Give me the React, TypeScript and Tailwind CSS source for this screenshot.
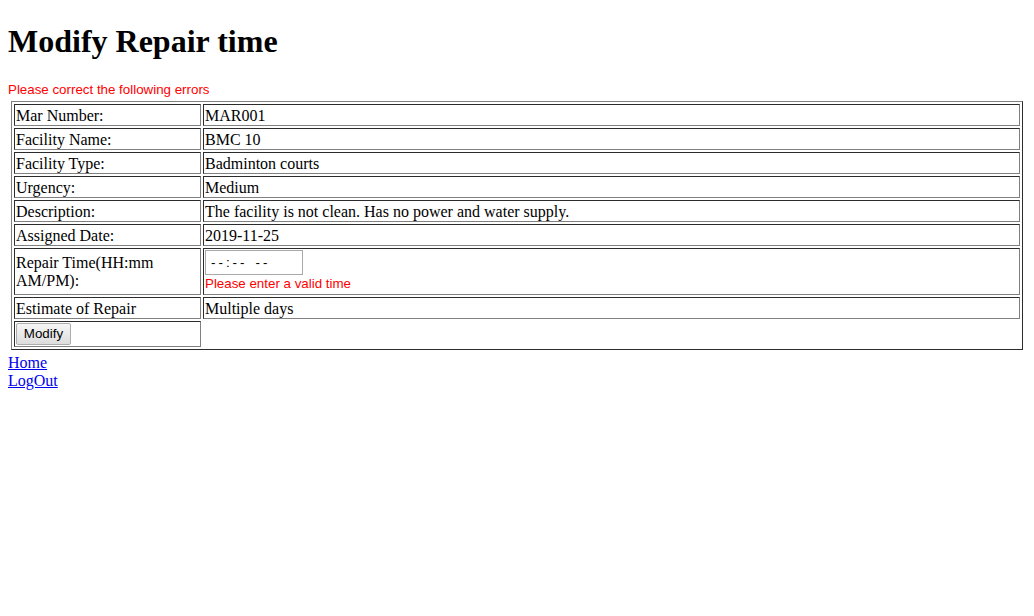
import React from 'react';

const rows: { label: string; value: string }[] = [
  { label: 'Mar Number:', value: 'MAR001' },
  { label: 'Facility Name:', value: 'BMC 10' },
  { label: 'Facility Type:', value: 'Badminton courts' },
  { label: 'Urgency:', value: 'Medium' },
  { label: 'Description:', value: 'The facility is not clean. Has no power and water supply.' },
  { label: 'Assigned Date:', value: '2019-11-25' },
];

const cell =
  'border border-t-[#2c2c2c] border-l-[#2c2c2c] border-r-[#808080] border-b-[#808080] p-[1px] text-left align-middle font-normal';

const App: React.FC = () => {
  return (
    <div className="m-2 font-['Liberation_Serif',serif] text-base leading-[18px] text-black">
      <h1 className="mt-[23px] mb-[21px] text-[32px] font-bold leading-[37px]">Modify Repair time</h1>

      <div className="h-[20px] font-['Liberation_Sans',Arial,sans-serif] text-[13.33px] leading-[18px] text-[#ff0000]">
        Please correct the following errors
      </div>

      <table className="ml-[3px] w-[1012px] border-separate border-spacing-[2px] border border-t-[#808080] border-l-[#808080] border-r-[#2c2c2c] border-b-[#2c2c2c]">
        <tbody>
          {rows.map((row) => (
            <tr key={row.label}>
              <td className={`${cell} w-[187px] h-[22px] pt-[2px] pb-0`}>{row.label}</td>
              <td className={`${cell} h-[22px] pt-[2px] pb-0`}>{row.value}</td>
            </tr>
          ))}
          <tr>
            <td className={`${cell} w-[187px]`}>
              Repair Time(HH:mm
              <br />
              AM/PM):
            </td>
            <td className={cell}>
              {/* time input placeholder, drawn like the browser's empty time field */}
              <div className="flex h-[25px] w-[98px] items-center border border-[#a9a9a9] bg-white pl-[5px] font-['Liberation_Sans',Arial,sans-serif] text-[13.33px] leading-none">
                <span className="tracking-[3px]">--</span>
                <span className="mr-[3px]">:</span>
                <span className="tracking-[3px]">--</span>
                <span className="ml-[8px] tracking-[3px]">--</span>
              </div>
              <div className="mb-[1px] mt-[1px] font-['Liberation_Sans',Arial,sans-serif] text-[13.33px] leading-[16px] text-[#ff0000]">
                Please enter a valid time
              </div>
            </td>
          </tr>
          <tr>
            <td className={`${cell} w-[187px] h-[22px] pt-[2px] pb-0`}>Estimate of Repair</td>
            <td className={`${cell} h-[22px] pt-[2px] pb-0`}>Multiple days</td>
          </tr>
          <tr>
            <td className={`${cell} w-[187px]`}>
              <button
                type="button"
                className="h-[22px] w-[55px] rounded-[2px] border border-[#adadad] bg-gradient-to-b from-[#f6f6f6] to-[#dddddd] font-['Liberation_Sans',Arial,sans-serif] text-[13.33px] leading-none text-black"
              >
                Modify
              </button>
            </td>
            <td />
          </tr>
        </tbody>
      </table>

      <div className="mt-[4px]">
        <a href="#" className="text-[#0000ee] underline">Home</a>
      </div>
      <div>
        <a href="#" className="text-[#0000ee] underline">LogOut</a>
      </div>
    </div>
  );
};

export default App;
